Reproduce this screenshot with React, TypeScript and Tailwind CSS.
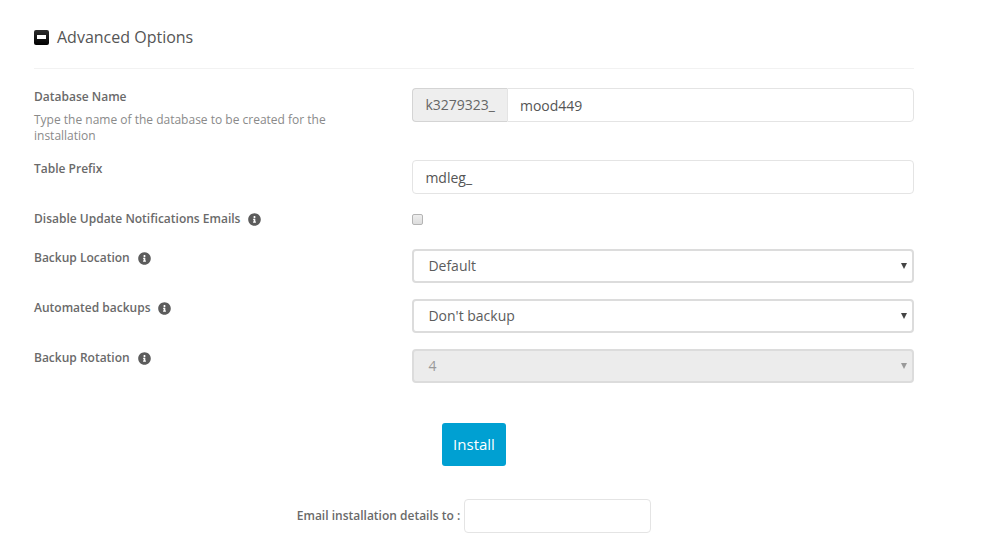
import { useState } from "react";
import type { ReactNode } from "react";
import { FaInfoCircle } from "react-icons/fa";

const inputClass =
    "h-[34px] w-full min-w-0 rounded border border-[#e4e4e4] bg-white px-3 text-sm text-[#555] outline-none";

function CollapseIcon() {
    return (
        <svg width="15" height="15" viewBox="0 0 15 15" aria-hidden="true">
            <defs>
                <linearGradient id="box" x1="0" y1="0" x2="0" y2="1">
                    <stop offset="0" stopColor="#2e2e2e" />
                    <stop offset="1" stopColor="#000" />
                </linearGradient>
            </defs>
            <rect width="15" height="15" rx="2" fill="url(#box)" />
            <rect x="3" y="5" width="9" height="4" fill="#fff" />
        </svg>
    );
}

type RowProps = {
    id: string;
    label: string;
    help?: string;
    info?: boolean;
    children: ReactNode;
};

function Row({ id, label, help, info, children }: RowProps) {
    return (
        <div className="flex">
            <div className="w-[43%] shrink-0 pr-20">
                <div className="flex items-center gap-2 whitespace-nowrap text-xs leading-[18px] font-semibold text-[#6a6a6a]">
                    <label htmlFor={id}>{label}</label>
                    {info && <FaInfoCircle className="mt-px size-[13px] text-[#5c5c5c]" />}
                </div>
                {help && (
                    <p className="mt-[6px] text-xs leading-4 text-[#8a8a8a]">
                        {help}
                    </p>
                )}
            </div>
            <div className="min-w-0 flex-1">{children}</div>
        </div>
    );
}

type SelectProps = {
    id: string;
    options: string[];
    disabled?: boolean;
};

function Select({ id, options, disabled }: SelectProps) {
    return (
        <div className="relative">
            <select
                id={id}
                disabled={disabled}
                className="block h-[34px] w-full appearance-none rounded border-2 border-[#dcdcdc] bg-white px-[14px] text-sm text-[#5c5c5c] outline-none disabled:bg-[#ececec] disabled:text-[#999] disabled:opacity-100"
            >
                {options.map((option) => (
                    <option key={option}>{option}</option>
                ))}
            </select>
            <svg
                viewBox="0 0 6 6"
                className={`pointer-events-none absolute top-[14px] right-[7px] size-[6px] ${
                    disabled ? "fill-[#999]" : "fill-[#444]"
                }`}
                aria-hidden="true"
            >
                <path d="M0 0h6L3 6z" />
            </svg>
        </div>
    );
}

export default function App() {
    const [database, setDatabase] = useState("mood449");
    const [prefix, setPrefix] = useState("mdleg_");
    const [email, setEmail] = useState("");

    return (
        <form
            className="min-h-screen bg-white pt-[23px] pr-20 pb-3 pl-[34px] font-['Open_Sans',sans-serif]"
            onSubmit={(e) => e.preventDefault()}
        >
            <h2 className="border-b border-[#f2f2f2] pb-[17px] text-base leading-7 text-[#555]">
                <button type="button" className="flex items-center gap-2">
                    <CollapseIcon />
                    Advanced Options
                </button>
            </h2>

            <div className="mt-[19px] flex flex-col gap-4">
                <Row
                    id="database"
                    label="Database Name"
                    help="Type the name of the database to be created for the installation"
                >
                    <div className="flex">
                        <span className="flex h-[34px] items-center rounded-l border border-r-0 border-[#d4d4d4] bg-[#eee] px-3 text-sm text-[#666]">
                            k3279323_
                        </span>
                        <input
                            id="database"
                            value={database}
                            onChange={(e) => setDatabase(e.target.value)}
                            className={`${inputClass} rounded-l-none`}
                        />
                    </div>
                </Row>
                <Row id="prefix" label="Table Prefix">
                    <input
                        id="prefix"
                        value={prefix}
                        onChange={(e) => setPrefix(e.target.value)}
                        className={`${inputClass} block`}
                    />
                </Row>
                <Row id="notify" label="Disable Update Notifications Emails" info>
                    <input
                        id="notify"
                        type="checkbox"
                        className="mt-1 mb-2 block size-[11px] appearance-none rounded-xs border border-[#b4b4b4] bg-linear-to-b from-[#eee] to-[#ddd] checked:bg-[#555]"
                    />
                </Row>
                <Row id="location" label="Backup Location" info>
                    <Select id="location" options={["Default"]} />
                </Row>
                <Row id="backups" label="Automated backups" info>
                    <Select id="backups" options={["Don't backup"]} />
                </Row>
                <Row id="rotation" label="Backup Rotation" info>
                    <Select id="rotation" options={["4"]} disabled />
                </Row>
            </div>

            <div className="mt-10 flex flex-col items-center gap-[33px]">
                <button
                    type="submit"
                    className="h-[43px] rounded-[3px] bg-[#00a0d2] px-[11px] text-[15px] text-white"
                >
                    Install
                </button>
                <div className="flex items-center gap-1">
                    <label
                        htmlFor="email"
                        className="shrink-0 text-xs font-semibold text-[#6a6a6a]"
                    >
                        Email installation details to :
                    </label>
                    <div className="w-[187px]">
                        <input
                            id="email"
                            type="email"
                            value={email}
                            onChange={(e) => setEmail(e.target.value)}
                            className={`${inputClass} block`}
                        />
                    </div>
                </div>
            </div>
        </form>
    );
}
